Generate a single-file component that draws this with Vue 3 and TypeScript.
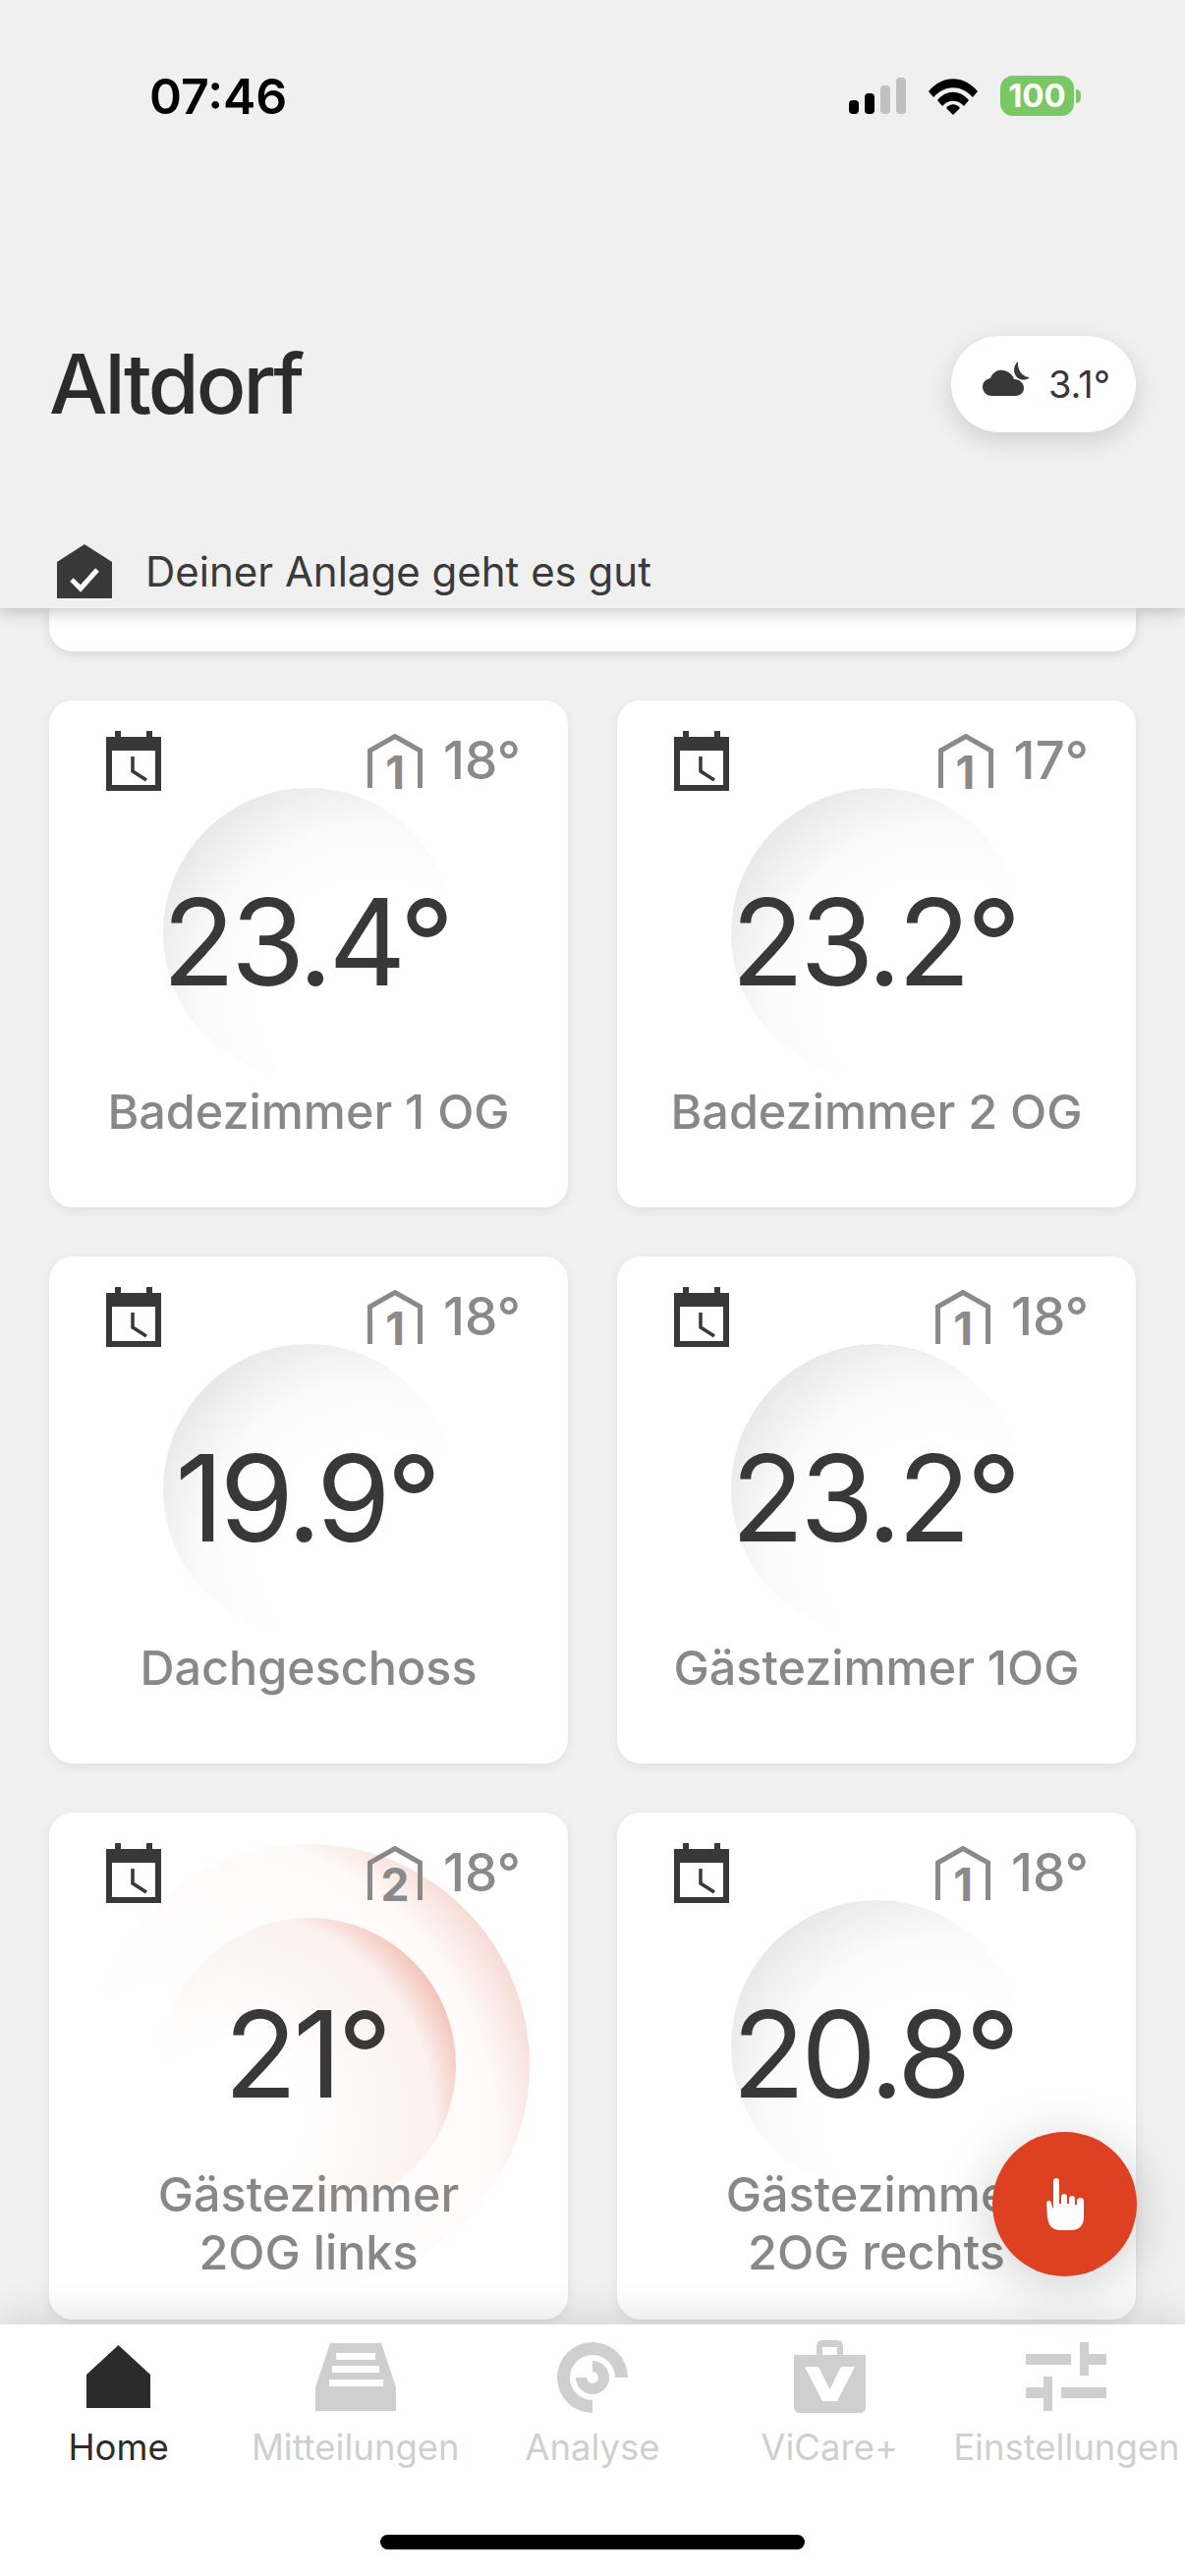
<script setup lang="ts">
interface Room {
  temp: string
  name: string
  floor: string
  set: string
  hot?: boolean
}

const rooms: Room[] = [
  { temp: '23.4°', name: 'Badezimmer 1 OG', floor: '1', set: '18°' },
  { temp: '23.2°', name: 'Badezimmer 2 OG', floor: '1', set: '17°' },
  { temp: '19.9°', name: 'Dachgeschoss', floor: '1', set: '18°' },
  { temp: '23.2°', name: 'Gästezimmer 1OG', floor: '1', set: '18°' },
  { temp: '21°', name: 'Gästezimmer\n2OG links', floor: '2', set: '18°', hot: true },
  { temp: '20.8°', name: 'Gästezimmer\n2OG rechts', floor: '1', set: '18°' }
]

const tabs = ['Home', 'Mitteilungen', 'Analyse', 'ViCare+', 'Einstellungen']
</script>

<template>
  <div class="screen">
    <header class="head">
      <div class="status">
        <span class="time">07:46</span>
        <div class="status-icons">
          <svg class="signal" width="58" height="37" viewBox="0 0 58 37">
            <rect x="0" y="23" width="10" height="14" rx="4" fill="#000" />
            <rect x="16" y="16" width="10" height="21" rx="4" fill="#000" />
            <rect x="32" y="8" width="10" height="29" rx="4" fill="#c0c0c0" />
            <rect x="48" y="0" width="10" height="37" rx="4" fill="#c0c0c0" />
          </svg>
          <svg class="wifi" width="52" height="38" viewBox="0 0 52 38">
            <path d="M1 14 C15 -3 37 -3 51 14 L46 20 C34 7 18 7 6 20 Z" fill="#000" />
            <path d="M10 23 C19 12 33 12 42 23 L37 29 C31 22 21 22 15 29 Z" fill="#000" />
            <path d="M19 31 C23 26 29 26 33 31 L26 38 Z" fill="#000" />
          </svg>
          <div class="battery"><span>100</span></div>
          <span class="nub"></span>
        </div>
      </div>
      <div class="title-row">
        <h1>Altdorf</h1>
        <div class="weather">
          <svg class="weather-icon" width="48" height="35" viewBox="0 0 48 35">
            <path d="M10 35 C3 35 0 30 0 26 C0 21 3 18 8 17 C10 11 16 8 21 9 C27 10 31 14 32 18 C38 18 42 22 42 27 C42 32 38 35 33 35 Z" fill="#383838" />
            <path d="M36 0 C30 5 31 15 38 18 C41 19 45 19 48 16 C41 16 35 9 36 0 Z" fill="#383838" />
          </svg>
          <span>3.1°</span>
        </div>
      </div>
      <div class="health">
        <svg width="56" height="55" viewBox="0 0 56 55">
          <path d="M28 0 L56 18 V55 H0 V18 Z" fill="#383838" />
          <path d="M15 36 L24 45 L41 26" fill="none" stroke="#fff" stroke-width="5" />
        </svg>
        <span>Deiner Anlage geht es gut</span>
      </div>
    </header>

    <main class="scroll">
      <div class="stub"></div>
      <div class="grid">
        <article v-for="room in rooms" :key="room.name" class="card">
          <template v-if="room.hot">
            <span class="halo outer"></span>
            <span class="halo inner"></span>
          </template>
          <span v-else class="halo grey"></span>
          <div class="card-top">
            <svg class="cal" width="56" height="61" viewBox="0 0 56 61">
              <rect x="9" y="0" width="6" height="10" fill="#383838" />
              <rect x="41" y="0" width="6" height="10" fill="#383838" />
              <path fill-rule="evenodd" d="M0 6 H56 V61 H0 Z M6 20 V55 H50 V20 Z" fill="#383838" />
              <path d="M27 26 V41 L41 50" fill="none" stroke="#383838" stroke-width="3.5" />
            </svg>
            <div class="setpoint">
              <div class="house">
                <svg width="56" height="55" viewBox="0 0 56 55">
                  <path d="M2.500 55 V17 L28 2.500 L53.500 17 V55" fill="none" stroke="#8a8a8a" stroke-width="5" />
                </svg>
                <span class="floor">{{ room.floor }}</span>
              </div>
              <span class="set">{{ room.set }}</span>
            </div>
          </div>
          <div class="temp">{{ room.temp }}</div>
          <div class="name">{{ room.name }}</div>
        </article>
      </div>
    </main>

    <nav class="tabs">
      <div v-for="(tab, i) in tabs" :key="tab" class="tab" :class="{ active: i === 0 }">
        <div class="tab-icon">
          <svg v-if="i === 0" width="65" height="64" viewBox="0 0 65 64">
            <path d="M32.500 0 L65 30 V64 H0 V30 Z" fill="#2b2b2b" />
          </svg>
          <svg v-else-if="i === 1" width="82" height="69" viewBox="0 0 82 69">
            <path fill-rule="evenodd" d="M15 0 H67 L82 45 V69 H0 V45 Z M21 10 V17 H61 V10 Z M17 23 V30 H65 V23 Z M14 37 V44 H69 V37 Z" fill="#cfcfcf" />
          </svg>
          <svg v-else-if="i === 2" width="74" height="73" viewBox="0 0 74 73">
            <path d="M37 73 A36 36 0 1 1 73 37 H60 A23 23 0 1 0 37 60 Z" fill="#cfcfcf" />
            <path d="M37 20 A17 17 0 1 1 20 37 H31 A6 6 0 1 0 37 31 Z" fill="#cfcfcf" />
          </svg>
          <svg v-else-if="i === 3" width="73" height="74" viewBox="0 0 73 74">
            <path fill-rule="evenodd" d="M23 15 V6 Q23 0 29 0 H44 Q50 0 50 6 V15 H73 V68 Q73 74 67 74 H6 Q0 74 0 68 V15 Z M29 7 V15 H44 V7 Z M11 27 L29 62 H44 L62 27 H48 L36.500 50 L25 27 Z" fill="#cfcfcf" />
          </svg>
          <svg v-else width="82" height="70" viewBox="0 0 82 70">
            <path d="M0 12 H46 V23 H0 Z M55 0 H64 V12 H82 V23 H64 V34 H55 Z M18 35 H27 V70 H18 V57 H0 V46 H18 Z M36 46 H82 V57 H36 Z" fill="#cfcfcf" />
          </svg>
        </div>
        <span class="tab-label">{{ tab }}</span>
      </div>
      <span class="home-bar"></span>
    </nav>

    <button class="fab" type="button" aria-label="Schnellzugriff">
      <svg width="38" height="53" viewBox="0 0 38 53">
        <path d="M0 26 C0 22 5 22 5 26 L7 32 V3 A3 3 0 0 1 13 3 V26 H15 V19 C15 15 21 15 21 19 V26 H23 V21 C23 17 29 17 29 21 V27 H31 V23 C31 19 38 19 38 23 V40 C38 48 33 53 26 53 H14 C6 53 2 48 1 40 Z" fill="#fff" />
      </svg>
    </button>
  </div>
</template>

<style>
html,
body {
  margin: 0;
  padding: 0;
  background: #f1f1f1;
}
</style>

<style scoped>
.screen {
  position: relative;
  width: 1206px;
  height: 2622px;
  display: flex;
  flex-direction: column;
  overflow: hidden;
  background: #f1f1f1;
  font-family: Inter, "Noto Sans", sans-serif;
}

.head {
  position: relative;
  z-index: 3;
  height: 619px;
  flex: none;
  box-sizing: border-box;
  background: #f0f0f0;
  box-shadow: 0 4px 16px rgba(0, 0, 0, 0.22);
  display: flex;
  flex-direction: column;
}

.status {
  height: 77px;
  margin-top: 59px;
  padding-left: 152px;
  display: flex;
  align-items: center;
  justify-content: space-between;
}

.time {
  font-size: 50px;
  line-height: 50px;
  font-weight: 600;
  color: #000;
}

.status-icons {
  display: flex;
  align-items: center;
  padding-right: 106px;
}

.signal {
  margin-right: 22px;
}

.wifi {
  margin-right: 22px;
}

.battery {
  width: 75px;
  height: 41px;
  border-radius: 13px;
  background: #78c864;
  display: flex;
  align-items: center;
  justify-content: center;
  color: #fff;
  font-size: 33px;
  line-height: 41px;
  font-weight: 700;
}

.nub {
  width: 5px;
  height: 14px;
  margin-left: 2px;
  border-radius: 0 7px 7px 0;
  background: #78c864;
}

.title-row {
  margin-top: 206px;
  padding: 0 50px;
  display: flex;
  align-items: center;
  justify-content: space-between;
}

h1 {
  margin: 0;
  font-size: 84px;
  line-height: 98px;
  font-weight: 500;
  letter-spacing: -3px;
  color: #2b2b2b;
}

.weather {
  width: 188px;
  height: 98px;
  box-sizing: border-box;
  padding-left: 32px;
  border-radius: 49px;
  background: #fff;
  box-shadow: 0 8px 24px rgba(0, 0, 0, 0.14);
  display: flex;
  align-items: center;
  gap: 19px;
  font-size: 38px;
  color: #383838;
}

.weather-icon {
  margin-bottom: 11px;
}

.health {
  margin-top: 114px;
  padding-left: 58px;
  display: flex;
  align-items: center;
  gap: 34px;
  font-size: 42px;
  line-height: 55px;
  color: #3a3a3a;
}

.scroll {
  flex: 1;
  min-height: 0;
  overflow: hidden;
  padding: 0 50px;
}

.stub {
  height: 44px;
  background: #fff;
  border-radius: 0 0 24px 24px;
  box-shadow: 0 3px 12px rgba(0, 0, 0, 0.12);
  margin-bottom: 50px;
}

.grid {
  display: grid;
  grid-template-columns: 528px 528px;
  gap: 50px;
}

.card {
  position: relative;
  height: 516px;
  box-sizing: border-box;
  border-radius: 24px;
  background: #fff;
  box-shadow: 0 3px 12px rgba(0, 0, 0, 0.08);
}

.halo {
  position: absolute;
  border-radius: 50%;
  pointer-events: none;
}

.grey {
  left: 116px;
  top: 89px;
  width: 296px;
  height: 296px;
  background: radial-gradient(circle 240px at 72% 72%, #fff 48%, #fafafa 74%, #e8e8e8 100%);
}

.outer {
  left: 39px;
  top: 32px;
  width: 450px;
  height: 450px;
  background: radial-gradient(circle 375px at 22% 68%, rgba(255, 255, 255, 0) 40%, rgba(250, 232, 227, 0.2) 85%, rgba(240, 175, 160, 0.45) 100%);
}

.inner {
  left: 114px;
  top: 107px;
  width: 300px;
  height: 300px;
  background: radial-gradient(circle 250px at 22% 68%, rgba(255, 255, 255, 0) 30%, rgba(245, 215, 205, 0.3) 85%, rgba(238, 165, 150, 0.65) 100%);
}

.card-top {
  position: relative;
  height: 92px;
  box-sizing: border-box;
  padding: 31px 48px 0 58px;
  display: flex;
  justify-content: space-between;
  align-items: flex-start;
}

.setpoint {
  display: flex;
  align-items: flex-start;
  gap: 21px;
  margin-top: 3px;
  color: #8a8a8a;
}

.house {
  position: relative;
  width: 56px;
  height: 55px;
  flex: none;
}

.house svg {
  display: block;
}

.floor {
  position: absolute;
  left: 0;
  right: 0;
  bottom: -1px;
  text-align: center;
  font-size: 46px;
  line-height: 34px;
  font-weight: 700;
}

.set {
  padding-top: 4px;
  font-size: 53px;
  line-height: 46px;
  font-weight: 550;
}

.temp {
  position: relative;
  margin-top: 93px;
  margin-left: -5px;
  text-align: center;
  font-size: 122px;
  line-height: 122px;
  font-weight: 400;
  letter-spacing: -4.200px;
  color: #383838;
}

.name {
  position: relative;
  margin-top: 52px;
  height: 118px;
  display: flex;
  align-items: center;
  justify-content: center;
  text-align: center;
  white-space: pre-line;
  font-size: 48.500px;
  line-height: 59px;
  font-weight: 550;
  color: #888;
}

.tabs {
  position: relative;
  z-index: 2;
  flex: none;
  height: 256px;
  background: #fff;
  display: grid;
  grid-template-columns: repeat(5, 1fr);
  align-content: start;
  box-shadow: 0 -4px 42px rgba(0, 0, 0, 0.14);
}

.tab {
  display: flex;
  flex-direction: column;
  align-items: center;
  color: #cfcfcf;
}

.tab.active {
  color: #2b2b2b;
}

.tab-icon {
  height: 76px;
  margin-top: 15px;
  margin-bottom: 12px;
  display: flex;
  align-items: center;
  justify-content: center;
}

.tab-label {
  font-size: 36.500px;
  line-height: 44px;
  white-space: nowrap;
}

.home-bar {
  position: absolute;
  left: 387px;
  top: 214px;
  width: 432px;
  height: 15px;
  border-radius: 8px;
  background: #000;
}

.fab {
  position: absolute;
  z-index: 2;
  left: 1010px;
  top: 2170px;
  width: 147px;
  height: 147px;
  padding: 0;
  border: 0;
  border-radius: 50%;
  background: #dd4122;
  box-shadow: 0 10px 60px rgba(0, 0, 0, 0.2);
  display: flex;
  align-items: center;
  justify-content: center;
}
</style>
